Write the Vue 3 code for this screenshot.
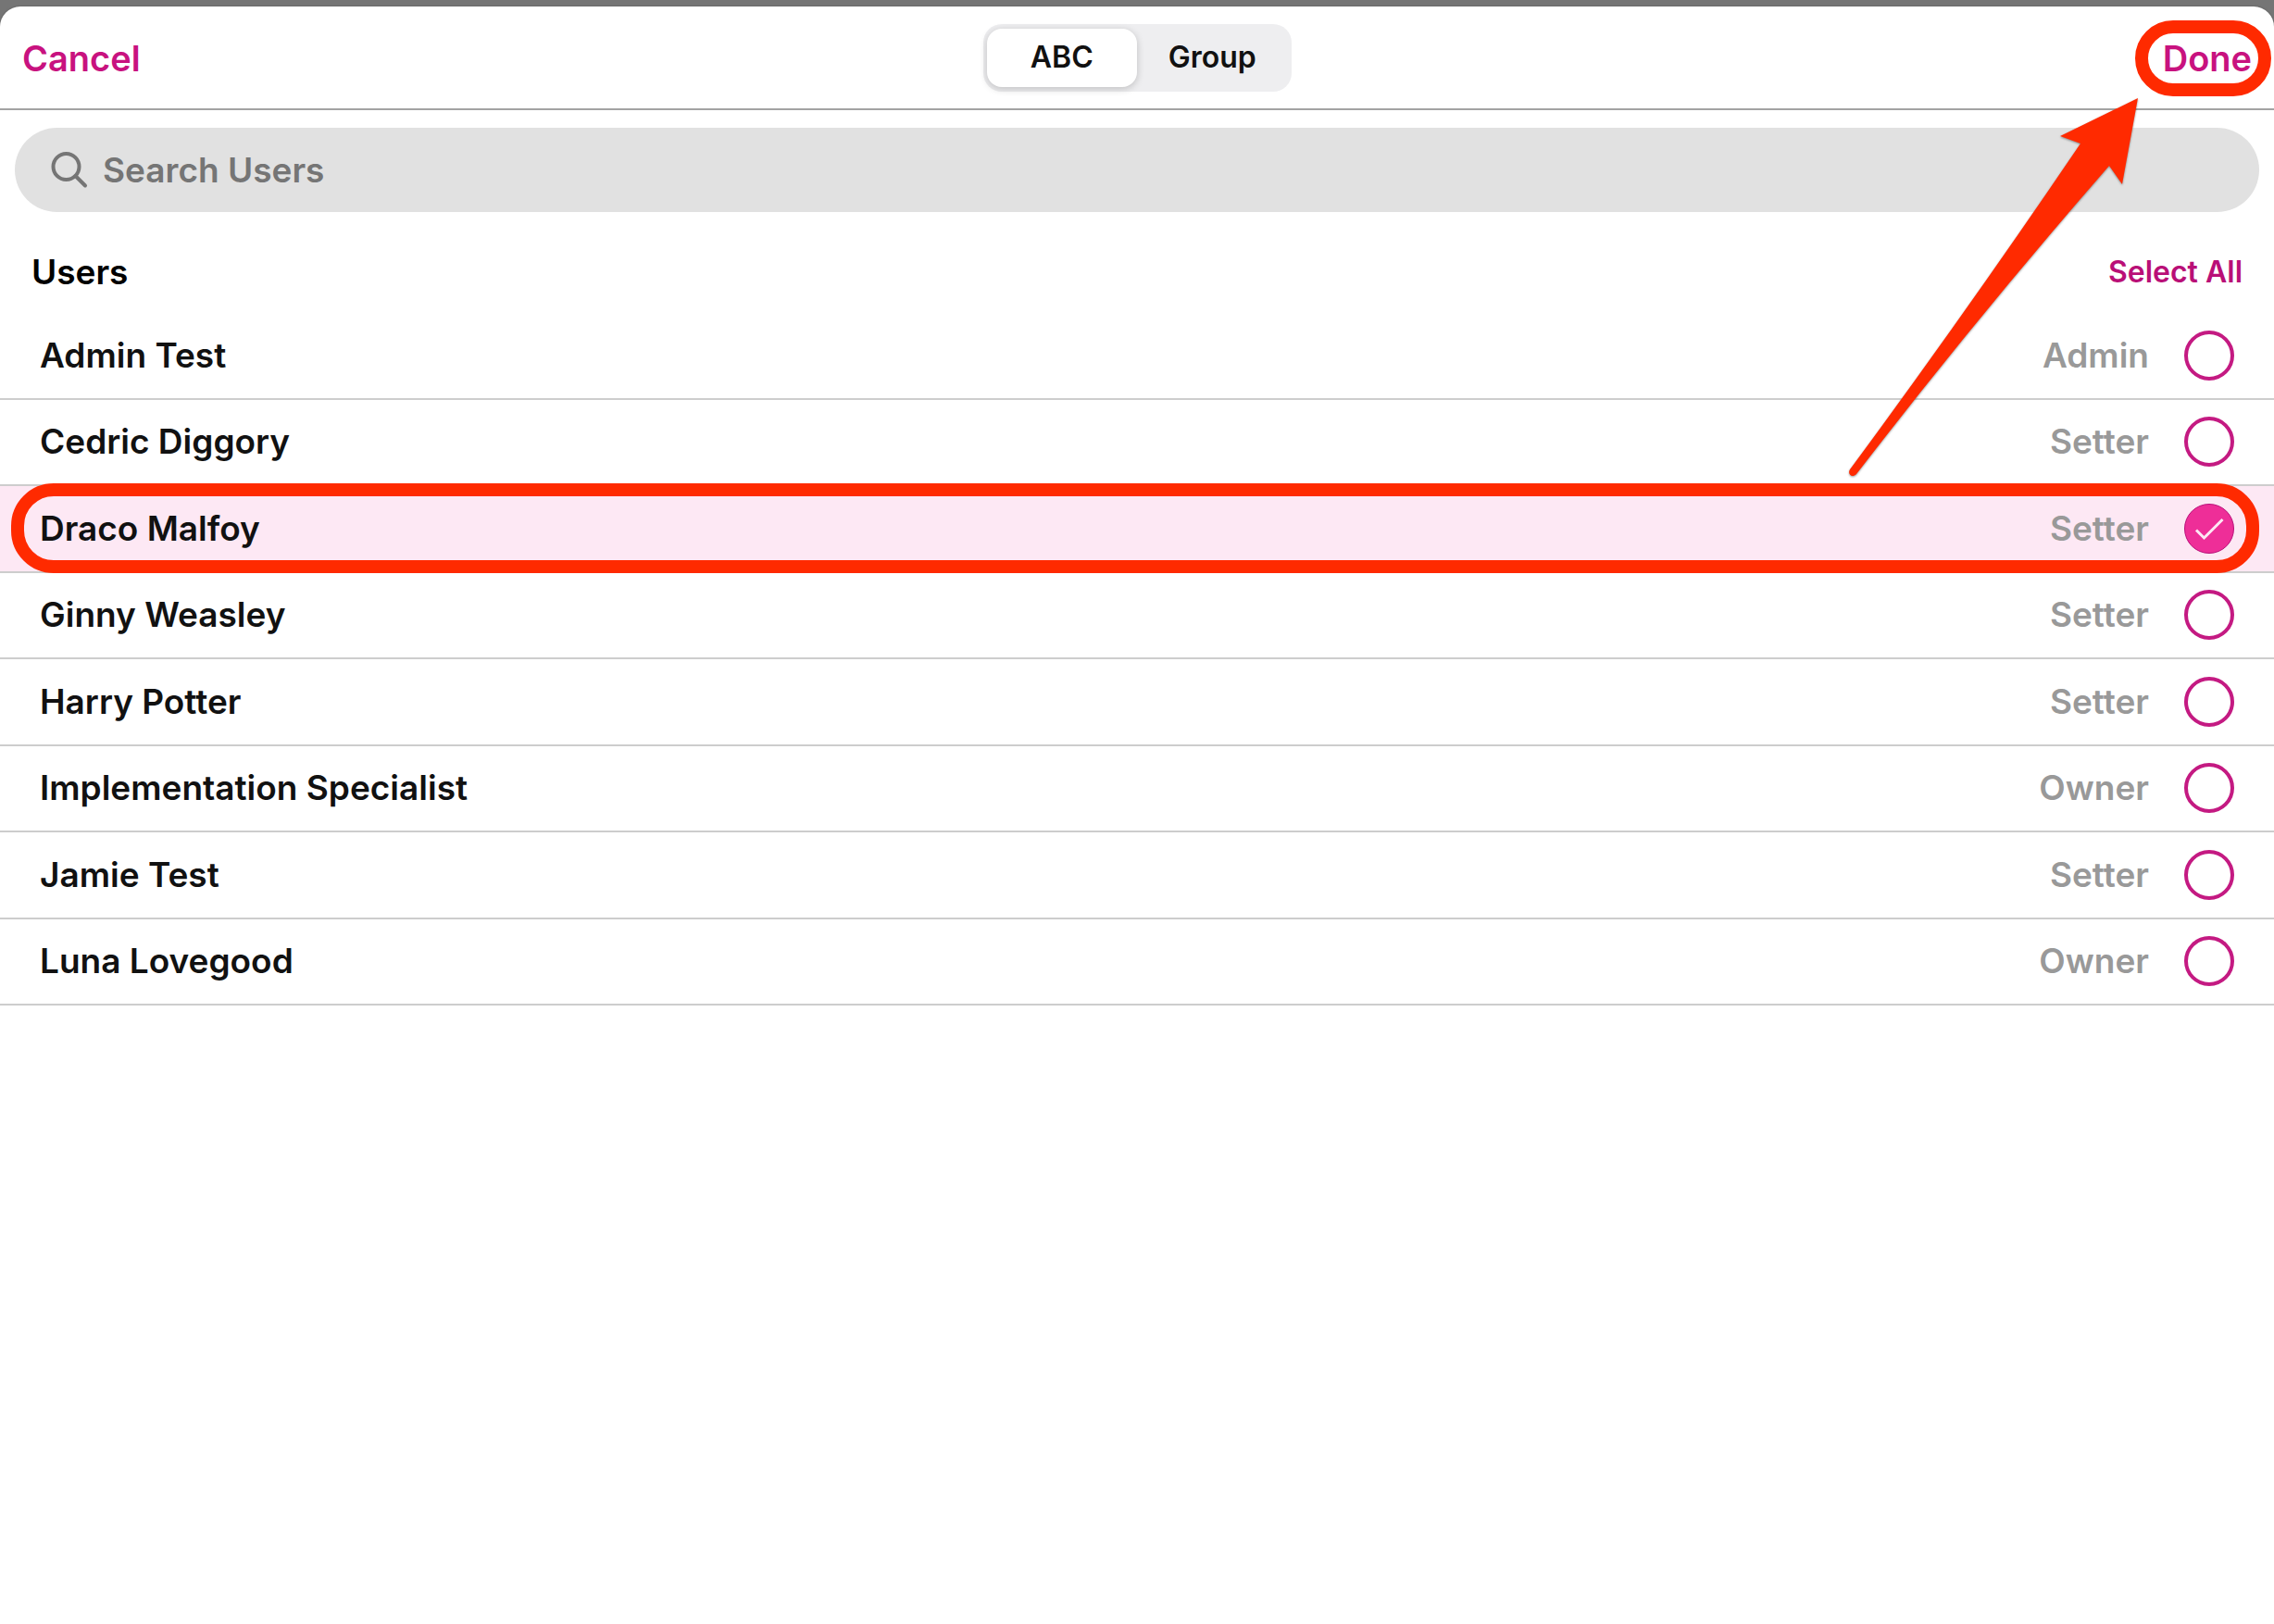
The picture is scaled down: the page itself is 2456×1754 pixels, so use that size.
<script setup>
import { ref } from 'vue'

const view = ref('ABC')
const views = ['ABC', 'Group']
const query = ref('')

const users = ref([
  { name: 'Admin Test', role: 'Admin', selected: false },
  { name: 'Cedric Diggory', role: 'Setter', selected: false },
  { name: 'Draco Malfoy', role: 'Setter', selected: true },
  { name: 'Ginny Weasley', role: 'Setter', selected: false },
  { name: 'Harry Potter', role: 'Setter', selected: false },
  { name: 'Implementation Specialist', role: 'Owner', selected: false },
  { name: 'Jamie Test', role: 'Setter', selected: false },
  { name: 'Luna Lovegood', role: 'Owner', selected: false },
])

function selectAll() {
  users.value.forEach((u) => { u.selected = true })
}
</script>

<template>
  <div class="page">
    <main class="sheet">
      <header class="bar">
        <div class="side">
          <button type="button" class="action">Cancel</button>
        </div>
        <div class="segments" role="group" aria-label="Sort by">
          <button
            v-for="v in views"
            :key="v"
            type="button"
            class="segment"
            :class="{ active: view === v }"
            :aria-pressed="view === v"
            @click="view = v"
          >{{ v }}</button>
        </div>
        <div class="side end">
          <button type="button" class="action done">Done</button>
        </div>
      </header>

      <label class="search">
        <svg class="glass" viewBox="0 0 40 40" aria-hidden="true">
          <circle cx="16.5" cy="16" r="14" />
          <path d="M26.5 26 L37 36.5" />
        </svg>
        <input v-model="query" type="search" placeholder="Search Users" aria-label="Search Users">
      </label>

      <div class="heading">
        <h2>Users</h2>
        <button type="button" class="all" @click="selectAll">Select All</button>
      </div>

      <ul class="list">
        <li v-for="(u, i) in users" :key="u.name" class="row" :class="{ selected: u.selected, marked: i === 2 }">
          <label class="line">
            <span class="name">{{ u.name }}</span>
            <span class="role">{{ u.role }}</span>
            <span class="tick">
              <input v-model="u.selected" type="checkbox">
              <svg v-if="u.selected" viewBox="0 0 54 54" aria-hidden="true">
                <path d="M13 28.5 L21.5 37 L41.5 17" />
              </svg>
            </span>
          </label>
        </li>
      </ul>
    </main>

    <svg class="arrow" viewBox="0 0 320 420" aria-hidden="true">
      <path d="M314 4 L230 45 L252 53 Q130 233 3 405 C0 410 5 415 10 410 Q140 241 283 77 L297 97 Z" />
    </svg>
  </div>
</template>

<style>
body {
  background: #757575;
}
</style>

<style scoped>
.page {
  position: relative;
  min-height: 100vh;
  box-sizing: border-box;
  padding-top: 7px;
  background: #757575;
  font-family: Inter, "Liberation Sans", sans-serif;
  font-weight: 600;
  font-variant-ligatures: none;
  color: #111;
}

.sheet {
  min-height: calc(100vh - 7px);
  border-radius: 22px 22px 0 0;
  background: #fff;
  box-shadow: 0 0 2px #555;
}

button {
  border: 0;
  padding: 0;
  background: none;
  font: inherit;
  color: inherit;
}

.bar {
  display: flex;
  align-items: center;
  height: 110px;
  padding: 0 24px;
  border-bottom: 2px solid #a3a3a3;
}

.side {
  flex: 1;
  display: flex;
}

.end {
  justify-content: flex-end;
}

.action {
  position: relative;
  margin-top: 2px;
  font-size: 38px;
  line-height: 46px;
  color: #c8127f;
}

.done::after {
  content: "";
  position: absolute;
  inset: -18px -21px -18px -30px;
  border: 14px solid #ff2a00;
  border-radius: 41px;
}

.segments {
  display: flex;
  width: 325px;
  height: 63px;
  padding: 5px 4px;
  border-radius: 20px;
  background: #eeeef0;
}

.segment {
  flex: 1;
  border-radius: 16px;
  font-size: 32px;
  line-height: 40px;
}

.segment.active {
  background: #fff;
  box-shadow: 0 2px 8px rgba(0, 0, 0, 0.2);
}

.search {
  display: flex;
  align-items: center;
  gap: 16px;
  height: 91px;
  margin: 19px 16px 0;
  padding: 0 39px;
  border-radius: 46px;
  background: #e1e1e1;
}

.glass {
  flex: none;
  width: 40px;
  height: 40px;
  fill: none;
  stroke: #757575;
  stroke-width: 4;
  stroke-linecap: round;
}

.search input {
  flex: 1;
  min-width: 0;
  border: 0;
  padding: 0;
  outline: 0;
  background: none;
  font: inherit;
  font-size: 37px;
  line-height: 44px;
  color: #111;
  appearance: none;
}

.search input::placeholder {
  color: #757575;
  opacity: 1;
}

.heading {
  display: flex;
  align-items: center;
  justify-content: space-between;
  box-sizing: border-box;
  height: 109px;
  padding: 20px 34px 0;
  color: #000;
}

.heading h2 {
  margin: 0;
  font-size: 37px;
  line-height: 44px;
  font-weight: 600;
}

.all {
  font-size: 32px;
  line-height: 40px;
  color: #b90f77;
}

.list {
  display: flex;
  flex-direction: column;
  min-height: 748px;
  margin: 0;
  padding: 0;
  list-style: none;
}

.row {
  position: relative;
  flex: 1;
  display: flex;
  border-bottom: 2px solid #cdcdcd;
}

.row.selected {
  background: #fde8f4;
}

.row.marked::after {
  content: "";
  position: absolute;
  inset: -3px 16px -2px 12px;
  border: 14px solid #ff2a00;
  border-radius: 46px;
  pointer-events: none;
}

.line {
  flex: 1;
  display: flex;
  align-items: center;
  padding: 0 43px;
  font-size: 37px;
  line-height: 44px;
}

.name {
  flex: 1;
}

.role {
  color: #999;
}

.tick {
  display: grid;
  width: 54px;
  height: 54px;
  margin-left: 38px;
}

.tick input,
.tick svg {
  grid-area: 1 / 1;
  width: 54px;
  height: 54px;
  margin: 0;
}

.tick input {
  appearance: none;
  box-sizing: border-box;
  border: 4px solid #c41a82;
  border-radius: 50%;
}

.tick input:checked {
  border: 1px solid #b9107a;
  background: #ee2e98;
}

.tick svg {
  fill: none;
  stroke: #fde8f4;
  stroke-width: 3;
  pointer-events: none;
}

.arrow {
  position: absolute;
  top: 102px;
  right: 141px;
  width: 320px;
  height: 420px;
  fill: #ff2a00;
  filter: drop-shadow(0 1px 1px rgba(0, 0, 0, 0.4));
  pointer-events: none;
}
</style>
